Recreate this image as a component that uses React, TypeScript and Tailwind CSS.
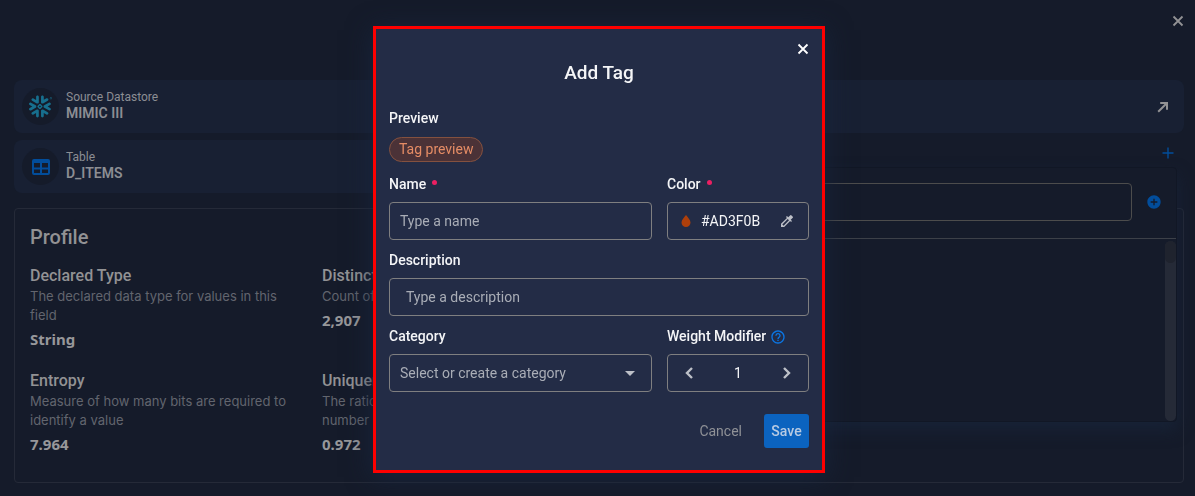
import type { ReactNode } from "react";
import { MdAddCircle, MdArrowDropDown, MdColorize, MdHelpOutline } from "react-icons/md";
import { SiSnowflake } from "react-icons/si";

const fieldBox = "h-[38px] w-full rounded border border-[#7f7f80] bg-transparent";

function CloseIcon() {
  return (
    <svg viewBox="0 0 12 12" className="size-3" fill="none" stroke="currentColor" strokeWidth="1.8">
      <path d="M1.5 1.5l9 9M10.5 1.5l-9 9" />
    </svg>
  );
}

function Metric({ title, text, value }: { title: string; text: string; value: string }) {
  return (
    <div className="px-[15px]">
      <h3 className="text-[16px] leading-[22px] font-medium text-[#929294]">{title}</h3>
      <p className="font-['Inter',sans-serif] text-[13px] leading-[19px] text-[#62656e]">{text}</p>
      <p className="mt-[3px] font-['Noto_Sans',sans-serif] text-[15px] leading-[22px] font-bold text-[#97979a]">{value}</p>
    </div>
  );
}

function SourceCard({ icon, label, name, action }: { icon: ReactNode; label: string; name: string; action?: ReactNode }) {
  return (
    <div className="flex h-[53px] items-center rounded-lg bg-[#182033] pr-[14px] pl-2">
      <div className="mr-[7px] flex size-[37px] items-center justify-center rounded-full bg-[#151b2a]">{icon}</div>
      <div className="flex-1 pb-[3px] leading-4 text-[#8c8e93]">
        <p className="text-[12px]">{label}</p>
        <p className="text-[14px] font-semibold">{name}</p>
      </div>
      {action}
    </div>
  );
}

function FieldLabel({ htmlFor, children, required }: { htmlFor: string; children: ReactNode; required?: boolean }) {
  return (
    <label htmlFor={htmlFor} className="mb-[7px] flex h-[21px] items-center text-[14px] font-medium text-[#f4f5f7]">
      {children}
      {required && <span className="mb-1 ml-1.5 size-[5px] rounded-full bg-[#ec1f62]" />}
    </label>
  );
}

function Chevron({ right }: { right?: boolean }) {
  return (
    <svg viewBox="0 0 10 14" className="h-[14px] w-[10px]" fill="none" stroke="currentColor" strokeWidth="2.4">
      <path d={right ? "M2 2l5 5-5 5" : "M8 2L3 7l5 5"} />
    </svg>
  );
}

function TagPopover() {
  return (
    <div className="absolute top-[27px] right-[7px] h-[255px] w-[560px] rounded border border-[#111725] bg-[#151b2a] shadow-[0_8px_16px_rgba(24,36,58,0.8)]">
      <div className="flex h-[71px] items-start border-b border-[#3c4048] pt-[15px] pr-[14px] pl-4">
        <input aria-label="Search tags" className="h-[38px] min-w-0 flex-1 rounded border border-[#4c4c4c] bg-transparent px-3 text-[14px] text-[#8c8e93]" />
        <button aria-label="Add tag" className="mt-[11px] ml-[14px] text-[#024d9b]">
          <MdAddCircle size={16} />
        </button>
      </div>
      <div className="flex justify-end pt-0.5">
        <div className="h-[180px] w-[11px] rounded-md bg-[#252a37]">
          <div className="h-[22px] rounded-md bg-[#1f232e]" />
        </div>
      </div>
    </div>
  );
}

function AddTagDialog() {
  return (
    <div className="fixed inset-0 flex items-start justify-center pt-[26px] pl-[3px]">
      <form
        role="dialog"
        aria-labelledby="dialog-title"
        onSubmit={(e) => e.preventDefault()}
        className="w-full max-w-[452px] border-[3px] border-[#fe0000] bg-[#232c46] px-[13px] pb-[22px] shadow-[0_4px_24px_rgba(24,38,62,0.9)]"
      >
        <div className="flex h-8 items-start justify-end pt-[14px]">
          <button type="button" aria-label="Close" className="text-white">
            <CloseIcon />
          </button>
        </div>
        <h2 id="dialog-title" className="h-[46px] text-center text-[19px] leading-6 font-medium text-[#f4f5f7]">
          Add Tag
        </h2>
        <p className="text-[14px] leading-[22px] font-medium text-[#f4f5f7]">Preview</p>
        <div className="mt-2 mb-3 flex">
          <span className="h-[25px] rounded-full border border-[#84513f] bg-[#4b3237] px-[9px] text-[14px] leading-[23px] text-[#e58c65]">Tag preview</span>
        </div>
        <div className="grid grid-cols-[1fr_142px] gap-x-[15px] gap-y-[10px]">
          <div>
            <FieldLabel htmlFor="name" required>Name</FieldLabel>
            <input id="name" placeholder="Type a name" className={`${fieldBox} px-[10px] text-[14px] text-white placeholder:text-[#a9adb6]`} />
          </div>
          <div>
            <FieldLabel htmlFor="color" required>Color</FieldLabel>
            <div className={`${fieldBox} flex items-center px-[13px]`}>
              <svg viewBox="0 0 10 12" className="h-3 w-[10px] shrink-0" fill="#ad3f0b">
                <path d="M5 0C3.2 2.2.5 5 .5 7.6a4.5 4.3 0 0 0 9 0C9.5 5 6.8 2.2 5 0z" />
              </svg>
              <input id="color" defaultValue="#AD3F0B" className="ml-[10px] w-full min-w-0 bg-transparent text-[14px] text-[#f4f5f7]" />
              <button type="button" aria-label="Pick a color" className="text-[#bdc0c8]">
                <MdColorize size={16} />
              </button>
            </div>
          </div>
          <div className="col-span-2">
            <FieldLabel htmlFor="description">Description</FieldLabel>
            <input id="description" placeholder="Type a description" className={`${fieldBox} px-4 text-[14px] text-white placeholder:text-[#a9adb6]`} />
          </div>
          <div>
            <FieldLabel htmlFor="category">Category</FieldLabel>
            <div className="relative">
              <select id="category" className={`${fieldBox} appearance-none px-[10px] text-[14px] text-[#a9adb6]`}>
                <option>Select or create a category</option>
              </select>
              <MdArrowDropDown size={24} className="pointer-events-none absolute top-[7px] right-[10px] text-[#bdc0c8]" />
            </div>
          </div>
          <div>
            <div className="flex">
              <FieldLabel htmlFor="weight">Weight Modifier</FieldLabel>
              <MdHelpOutline size={16} className="mt-[3px] ml-1 text-[#0b76e5]" />
            </div>
            <div className={`${fieldBox} flex items-center justify-between px-4 text-[#bdc0c8]`}>
              <button type="button" aria-label="Decrease weight"><Chevron /></button>
              <input id="weight" defaultValue="1" inputMode="numeric" className="w-10 bg-transparent text-center text-[14px] text-[#f4f5f7]" />
              <button type="button" aria-label="Increase weight"><Chevron right /></button>
            </div>
          </div>
        </div>
        <div className="mt-[22px] flex justify-end gap-[14px] text-[14px]">
          <button type="button" className="h-[34px] px-2 text-[#8f9196]">Cancel</button>
          <button type="submit" className="h-[34px] w-[45px] rounded-[3px] bg-[#0b63bf] font-medium text-[#b8cbe3]">Save</button>
        </div>
      </form>
    </div>
  );
}

export default function App() {
  return (
    <div className="min-h-screen bg-[#151b2a] pr-[11px] pb-3 pl-[14px] font-['Roboto',sans-serif]">
      <header className="flex h-20 items-start justify-end pt-[15px]">
        <button aria-label="Close panel" className="text-[#929294]">
          <CloseIcon />
        </button>
      </header>
      <main>
        <SourceCard
          icon={<SiSnowflake size={23} className="text-[#176f8e]" />}
          label="Source Datastore"
          name="MIMIC III"
          action={
            <a href="#datastore" aria-label="Open datastore" className="text-[#929294]">
              <svg viewBox="0 0 14 14" className="size-[14px]" fill="none" stroke="currentColor" strokeWidth="2">
                <path d="M2.2 11.8L11 3M4.2 3H11v6.8" />
              </svg>
            </a>
          }
        />
        <div className="relative mt-[7px] grid grid-cols-2 items-start">
          <SourceCard
            icon={
              <svg viewBox="0 0 18 16" className="h-4 w-[18px]" fill="none" stroke="#024d9b" strokeWidth="2">
                <rect x="1" y="1" width="16" height="14" rx="1" />
                <path d="M1 2.5h16" strokeWidth="3" />
                <path d="M1 9.5h16M9 3v12" />
              </svg>
            }
            label="Table"
            name="D_ITEMS"
          />
          <button aria-label="New tag" className="mt-[7px] mr-[10px] justify-self-end text-[#024d9b]">
            <svg viewBox="0 0 12 12" className="size-3" stroke="currentColor" strokeWidth="1.4">
              <path d="M6 .5v11M.5 6h11" />
            </svg>
          </button>
          <TagPopover />
        </div>
        <section className="mt-[15px] rounded border border-[#252a38] pt-4 pb-[27px]">
          <h2 className="px-[15px] text-[20px] leading-6 font-medium text-[#929294]">Profile</h2>
          <div className="mt-4 grid grid-cols-4 gap-y-5">
            <Metric title="Declared Type" text="The declared data type for values in this field" value="String" />
            <Metric title="Distinct Count" text="Count of distinct values" value="2,907" />
            <div className="col-span-2" />
            <Metric title="Entropy" text="Measure of how many bits are required to identify a value" value="7.964" />
            <Metric title="Uniqueness" text="The ratio of distinct values to the total number of records" value="0.972" />
          </div>
        </section>
      </main>
      <AddTagDialog />
    </div>
  );
}
